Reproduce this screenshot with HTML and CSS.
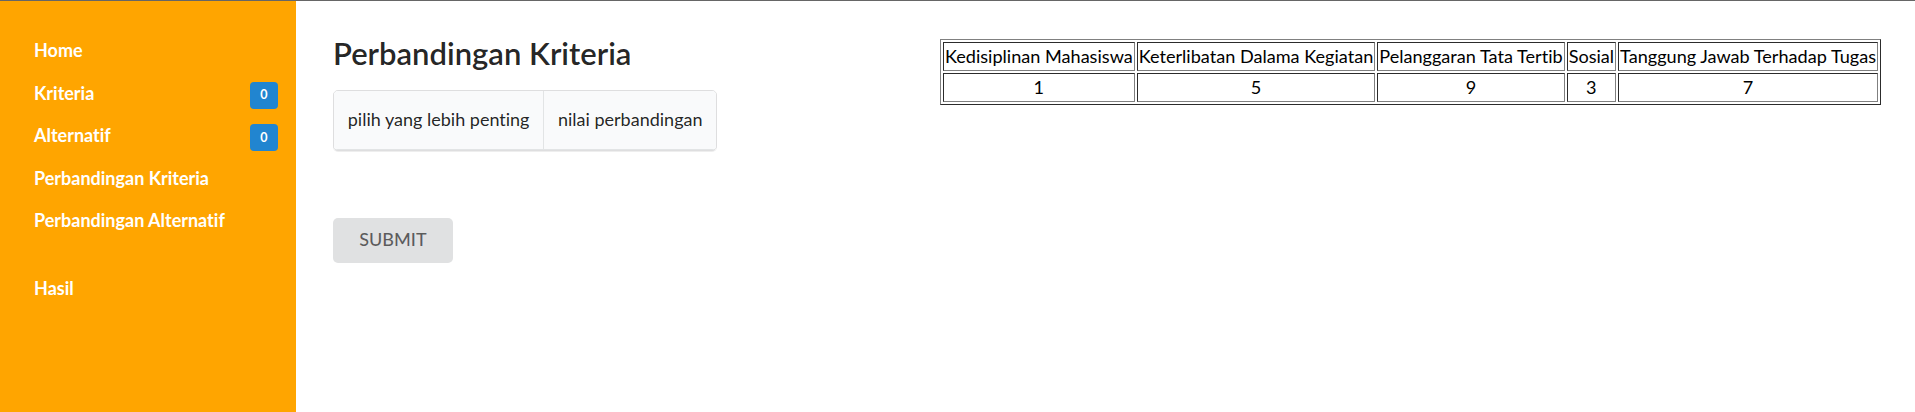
FILE: index.html
```html
<!DOCTYPE html>
<html lang="id">
<head>
<meta charset="utf-8">
<title>Perbandingan Kriteria</title>
<link rel="stylesheet" href="styles.css">
</head>
<body>
<div class="app">
  <nav class="sidebar">
    <a class="item">Home</a>
    <a class="item">Kriteria <span class="badge">0</span></a>
    <a class="item">Alternatif <span class="badge">0</span></a>
    <a class="item">Perbandingan Kriteria</a>
    <a class="item">Perbandingan Alternatif</a>
    <div class="spacer"></div>
    <a class="item">Hasil</a>
  </nav>
  <main class="main">
    <div class="form">
      <h2 class="title">Perbandingan Kriteria</h2>
      <table class="ui-table">
        <thead>
          <tr><th>pilih yang lebih penting</th><th>nilai perbandingan</th></tr>
        </thead>
      </table>
      <button class="btn" type="button">SUBMIT</button>
    </div>
    <table class="data">
      <tr>
        <th>Kedisiplinan Mahasiswa</th>
        <th>Keterlibatan Dalama Kegiatan</th>
        <th>Pelanggaran Tata Tertib</th>
        <th>Sosial</th>
        <th>Tanggung Jawab Terhadap Tugas</th>
      </tr>
      <tr>
        <td>1</td>
        <td>5</td>
        <td>9</td>
        <td>3</td>
        <td>7</td>
      </tr>
    </table>
  </main>
</div>
</body>
</html>
```
FILE: styles.css
```css
* { box-sizing: border-box; }

html, body {
  margin: 0;
  padding: 0;
}

body {
  border-top: 1px solid #666;
  font-family: Lato, "Open Sans", sans-serif;
  font-size: 18px;
  line-height: 25px;
  font-variant-ligatures: none;
  color: rgba(0, 0, 0, 0.87);
  background: #fff;
}

.app {
  display: flex;
  min-height: 411px;
}

.sidebar {
  width: 296px;
  flex: 0 0 296px;
  background: #FFA500;
  padding-top: 28.5px;
  display: flex;
  flex-direction: column;
}

.sidebar .item {
  display: flex;
  justify-content: space-between;
  align-items: center;
  height: 42.5px;
  padding: 0 18px 0 34px;
  line-height: 25px;
  font-size: 18px;
  font-weight: 700;
  color: #fff;
  text-decoration: none;
}

.sidebar .spacer {
  height: 25.5px;
}

.badge {
  display: inline-block;
  background: #2185D0;
  color: #fff;
  font-size: 12.5px;
  font-weight: 700;
  line-height: 1;
  padding: 7.3px 10.4px;
  border-radius: 4px;
  margin-top: 4px;
}

.main {
  flex: 1;
  display: flex;
  justify-content: space-between;
  align-items: flex-start;
  padding: 33px 34px 0 37px;
}

.form {
  display: flex;
  flex-direction: column;
  align-items: flex-start;
}

.title {
  margin: 0 0 17.5px;
  font-size: 31px;
  font-weight: 600;
  line-height: 38.6px;
  color: rgba(0, 0, 0, 0.87);
}

.ui-table {
  border: 1px solid rgba(34, 36, 38, 0.15);
  border-radius: 5px;
  border-collapse: separate;
  border-spacing: 0;
  overflow: hidden;
  box-shadow: 0 1px 0 rgba(34, 36, 38, 0.08);
}

.ui-table th {
  background: #F9FAFB;
  padding: 16.25px 13.75px;
  font-weight: 400;
  text-align: left;
  color: rgba(0, 0, 0, 0.87);
  border-bottom: 1px solid rgba(34, 36, 38, 0.1);
}

.ui-table th + th {
  border-left: 1px solid rgba(34, 36, 38, 0.1);
}

.btn {
  margin-top: 67px;
  font-family: inherit;
  font-size: 18px;
  font-weight: 500;
  line-height: 17.5px;
  padding: 13.75px 26.25px;
  border: none;
  border-radius: 5px;
  background: #E0E1E2;
  color: rgba(0, 0, 0, 0.6);
}

.data {
  margin-top: 5px;
  border: 1px outset gray;
  border-spacing: 2px;
  color: #000;
}

.data th,
.data td {
  border: 1px inset gray;
  padding: 1px;
  font-size: 18.1px;
  font-weight: 400;
  text-align: center;
}
```
